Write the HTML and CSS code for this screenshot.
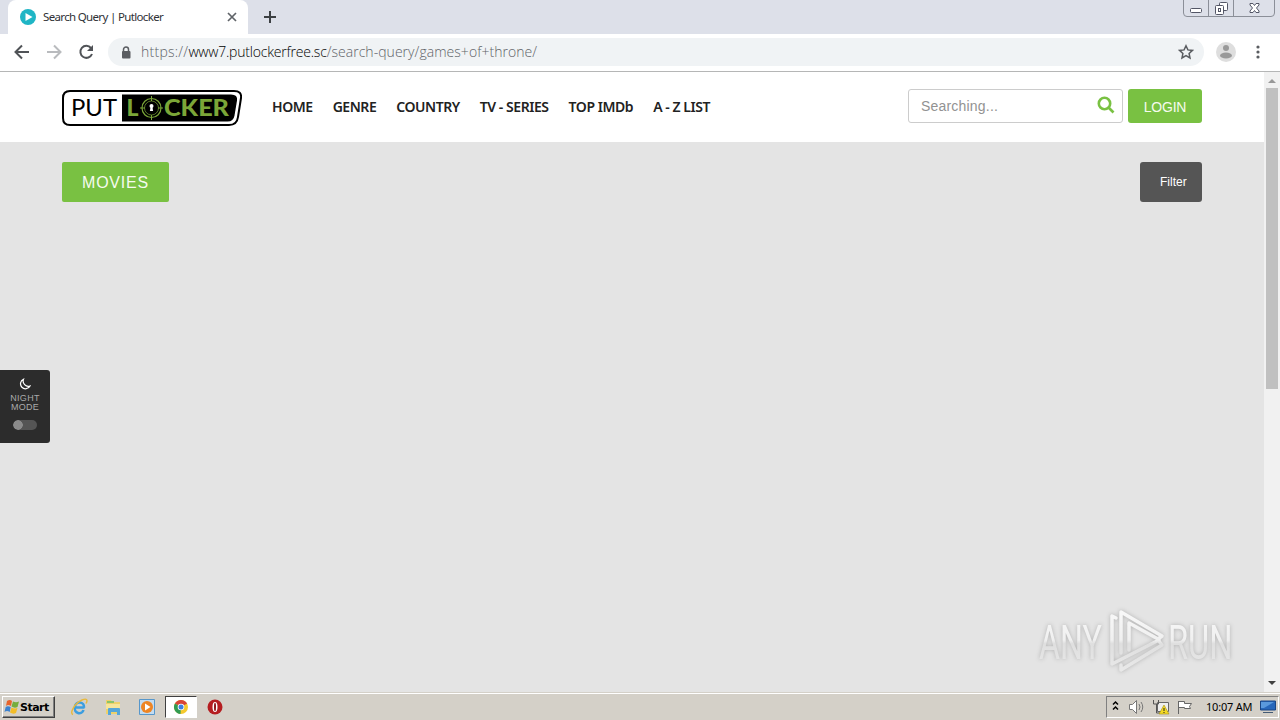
FILE: index.html
```
<!DOCTYPE html>
<html lang="en">

<head>
	<meta charset="UTF-8">
	<meta name="viewport" content="width=device-width, initial-scale=1.0">
	<title>Search Query | Putlocker</title>
	<link rel="stylesheet" href="styles.css">
</head>

<body>
	<div class="tabs">
		<div class="tab">
			<svg class="favicon" viewBox="0 0 16 16"><circle cx="8" cy="8" r="8" fill="#1fb5c5"/><path d="M5.5 4v8l7-4z" fill="#fff"/></svg>
			<span class="tab-title">Search Query | Putlocker</span>
			<svg class="tab-close" viewBox="0 0 10 10"><path d="M1 1l8 8M9 1l-8 8" stroke="#5f6368" stroke-width="1.7"/></svg>
		</div>
		<svg class="new-tab" viewBox="0 0 12 12"><path d="M6 0v12M0 6h12" stroke="#3c4043" stroke-width="2"/></svg>
		<svg class="window-buttons" viewBox="0 0 94 18">
			<path d="M1.500 0v13q0 3.500 3.500 3.500h84q3.500 0 3.500-3.500V0M26.500 0v16M51.500 0v16" fill="none" stroke="#8b8f98"/>
			<rect x="8.500" y="8.500" width="11" height="4" rx="1" fill="#fff" stroke="#535666"/>
			<rect x="37.500" y="2.500" width="8" height="8" rx="1" fill="#fff" stroke="#535666"/>
			<rect x="33.500" y="5.500" width="8" height="9" rx="1" fill="#fff" stroke="#535666"/>
			<rect x="36.500" y="8.500" width="2" height="3" fill="#fff" stroke="#535666"/>
			<path d="M68 3.500h3l1.500 2 1.500-2h3v1.500l-2.500 3 2.500 3v1.500h-3l-1.500-2-1.500 2h-3V11l2.500-3L68 5z" fill="#fff" stroke="#535666"/>
		</svg>
	</div>

	<div class="toolbar">
		<svg class="nav-icons" viewBox="0 0 108 36">
			<path d="M29 18H16M22 11.500L15.500 18l6.500 6.500" fill="none" stroke="#505357" stroke-width="2"/>
			<path d="M47 18h13M54 11.500l6.500 6.500-6.500 6.500" fill="none" stroke="#b9bbbe" stroke-width="2"/>
			<path d="M91 14a6 6 0 1 0 1 6" fill="none" stroke="#505357" stroke-width="2"/>
			<path d="M93 11v6h-6z" fill="#505357"/>
		</svg>
		<div class="omnibox">
			<svg class="lock" viewBox="0 0 10 13"><path d="M2.500 6V3.500a2.500 2.500 0 0 1 5 0V6" fill="none" stroke="#5a5d61" stroke-width="1.500"/><rect x="1" y="5" width="8.500" height="7.500" rx="1" fill="#5a5d61"/></svg>
			<span class="url"><span class="scheme">https://</span><b>www7.putlockerfree.sc</b>/search-query/games+of+throne/</span>
			<svg class="star" viewBox="0 0 16 16"><path d="M8 1.800l1.900 4.100 4.500.5-3.300 3.100.9 4.500L8 11.700 4 14l.9-4.500-3.300-3.100 4.500-.5z" fill="none" stroke="#5a5d61" stroke-width="1.500"/></svg>
		</div>
		<svg class="avatar" viewBox="0 0 20 20"><circle cx="10" cy="10" r="10" fill="#dedede"/><circle cx="10" cy="6" r="3" fill="#999"/><ellipse cx="10" cy="13.500" rx="6" ry="3" fill="#999"/></svg>
		<svg class="dots" viewBox="0 0 4 14"><g fill="#5a5d61"><circle cx="2" cy="2" r="1.600"/><circle cx="2" cy="7" r="1.600"/><circle cx="2" cy="12" r="1.600"/></g></svg>
	</div>

	<div class="viewport">
		<div class="page">
			<header class="header">
				<svg class="logo" viewBox="0 0 180 36">
					<path d="M8 1h164q8 0 7 7l-3 19q-1 8-9 8H8q-7 0-7-7V8q0-7 7-7z" fill="#fff" stroke="#000" stroke-width="2"/>
					<path d="M60 4.500h109q7 0 6 6l-2.500 15q-1 6-7 6H60z" fill="#000"/>
					<text class="logo-put" x="9" y="26" textLength="46" lengthAdjust="spacingAndGlyphs">PUT</text>
					<g class="logo-locker">
						<text x="64.500" y="26" textLength="12" lengthAdjust="spacingAndGlyphs">L</text>
						<text x="102" y="26" textLength="65" lengthAdjust="spacingAndGlyphs">CKER</text>
					</g>
					<g fill="none" stroke="#7ba638">
						<circle cx="89.500" cy="18" r="9.500" stroke-width="1.200"/>
						<circle cx="89.500" cy="18" r="7" stroke-width=".7"/>
						<path d="M89.500 6v5M89.500 25v5M78 18h5M96 18h5"/>
					</g>
					<circle cx="89.500" cy="16" r="2" fill="#fff"/>
					<path d="M88.700 16h1.600l.8 5h-3.200z" fill="#fff"/>
				</svg>
				<nav class="menu">
					<a>HOME</a>
					<a>GENRE</a>
					<a>COUNTRY</a>
					<a>TV - SERIES</a>
					<a>TOP IMDb</a>
					<a>A - Z LIST</a>
				</nav>
				<div class="search">
					<span>Searching...</span>
					<svg viewBox="0 0 18 18"><circle cx="7.500" cy="7.500" r="5.700" fill="none" stroke="#79c142" stroke-width="2.600"/><path d="M11.500 11.500l5 5" stroke="#79c142" stroke-width="2.600"/></svg>
				</div>
				<a class="login">LOGIN</a>
			</header>

			<main class="content">
				<h1 class="heading">MOVIES</h1>
				<a class="filter">Filter</a>
			</main>

			<div class="night">
				<svg class="moon" viewBox="0 0 12 12"><path d="M4.500 1.200A5 5 0 1 0 11 8 5.200 5.200 0 0 1 4.500 1.200z" fill="none" stroke="#fff" stroke-width="1.200"/></svg>
				<span>NIGHT<br>MODE</span>
				<i class="switch"></i>
			</div>

			<svg class="watermark" viewBox="0 0 210 72">
				<defs>
					<linearGradient id="shine" x1="0" y1="0" x2="0" y2="72" gradientUnits="userSpaceOnUse">
						<stop offset=".1" stop-color="#f8f8f8"/>
						<stop offset=".5" stop-color="#f0f0f0"/>
						<stop offset=".55" stop-color="#dfdfdf"/>
						<stop offset=".9" stop-color="#e8e8e8"/>
					</linearGradient>
					<!-- the letters sit on a baseline at 55, so their gradient starts above it -->
					<linearGradient id="shine-text" href="#shine" y1="-55" y2="17"/>
				</defs>
				<g class="watermark-text" fill="url(#shine-text)">
					<text transform="translate(9 55) scale(.67 1)">ANY</text>
					<text transform="translate(138 55) scale(.68 1)">RUN</text>
				</g>
				<g fill="none" stroke="url(#shine)" stroke-width="3.500" stroke-linejoin="round" stroke-linecap="round">
					<path d="M91 49V8l41 24-4 3-29-16v27"/>
					<path d="M86 14l-4-2v48l47-24"/>
					<path d="M91 61v5l41-25-4-5"/>
				</g>
			</svg>
		</div>
		<svg class="scrollbar" viewBox="0 0 16 620">
			<rect width="16" height="620" fill="#f1f1f1"/>
			<path d="M4 11l4-4 4 4z" fill="#989898"/>
			<rect x="2" y="16" width="12" height="301" fill="#c0c0c0"/>
			<path d="M4 609l4 4 4-4z" fill="#404040"/>
		</svg>
	</div>

	<footer class="taskbar">
		<div class="start">
			<svg viewBox="0 0 16 16">
				<path d="M3 2q3-2 5 0L7 7Q4 5 2 7z" fill="#e8642b"/>
				<path d="M9 2.500q3 1.500 6 0L13.500 8q-3 1.500-6-.5z" fill="#76ad3c"/>
				<path d="M1.700 8q2-1.500 5 0l-1 5Q3 11 .5 13z" fill="#3c82cf"/>
				<path d="M7.500 8.500q3 1.500 6 .5l-1.500 5q-3 1.500-6-.5z" fill="#f3bd28"/>
			</svg>
			<b>Start</b>
		</div>
		<div class="tasks">
			<div class="task">
				<svg viewBox="0 0 18 18"><path d="M14.500 9.500H5a4.300 4.300 0 0 0 8.500 2.500M5 8.500a4.500 4.500 0 0 1 9 1" fill="none" stroke="#3c9ee0" stroke-width="2.600"/><path d="M3 16.500C-1 15 5 5 12 2c5-2 6 0 4 3.500" fill="none" stroke="#e9b93a" stroke-width="1.400"/></svg>
			</div>
			<div class="task">
				<svg viewBox="0 0 18 18"><path d="M2 2h5l1 2h8v12H2z" fill="#eed16a"/><path d="M3 3h7v2H3z" fill="#8ac36b"/><path d="M2 6h14v5H2z" fill="#f6e59b"/><path d="M4 17v-6q0-1 1-1h10q1 0 1 1v6h-3v-3H7v3z" fill="#55a6d9"/></svg>
			</div>
			<div class="task">
				<svg viewBox="0 0 18 18"><path d="M1.500 1.500h15v15h-15z" fill="#c3dcf1" stroke="#5797cb"/><circle cx="9" cy="9" r="6" fill="#ee8524"/><path d="M7 5.500v7L12.500 9z" fill="#fff"/></svg>
			</div>
			<div class="task active">
				<svg viewBox="0 0 18 18"><circle cx="9" cy="9" r="7" fill="#f5c92e"/><path d="M9 9L2.900 5.500A7 7 0 0 1 15.100 5.500z" fill="#d94437"/><path d="M9 9L2.900 5.500A7 7 0 0 0 8.500 16z" fill="#329b52"/><circle cx="9" cy="9" r="3.300" fill="#fff"/><circle cx="9" cy="9" r="2.500" fill="#3e7fe0"/></svg>
			</div>
			<div class="task">
				<svg viewBox="0 0 18 18"><circle cx="9" cy="9" r="7.500" fill="#b51d20"/><ellipse cx="9" cy="9" rx="2.500" ry="5" fill="#fff"/><ellipse cx="9" cy="9" rx="1" ry="4.200" fill="#8d1518"/></svg>
			</div>
		</div>
		<div class="tray">
			<svg class="tray-icons" viewBox="0 0 94 20">
				<path d="M6 7.500L8.500 5 11 7.500M6 12.500L8.500 10l2.500 2.500" fill="none" stroke="#000" stroke-width="1.500"/>
				<path d="M22.500 7.500h3l4-4v13l-4-4h-3z" fill="#fff" stroke="#777"/>
				<path d="M32 7q2 3 0 6M34 5q3.500 5 0 10" fill="none" stroke="#777"/>
				<path d="M50.500 5.500h11v9h-11z" fill="#eee" stroke="#666"/>
				<path d="M46.500 3v4h5V3M49.500 7v9h6" fill="none" stroke="#555"/>
				<path d="M57 8l5 9H52z" fill="#f4da25" stroke="#a58e12" stroke-width=".6"/>
				<path d="M57 11v3M57 15v1" stroke="#222"/>
				<path d="M71.500 17V4M71.500 4.500h6v2h7l-2 3 1 2h-6v-1h-6" fill="#fff" stroke="#666"/>
			</svg>
			<span class="clock">10:07 AM</span>
			<svg class="desktop" viewBox="0 0 16 14"><path d="M.5 1h15v9H.500z" fill="#2767ba" stroke="#1b4684"/><path d="M1 2h13L4 8H1z" fill="#5a99dc"/><path d="M3 12.500h10" stroke="#445b75"/></svg>
		</div>
	</footer>
</body>

</html>
```
FILE: styles.css
```
* {
	margin: 0;
	padding: 0;
	box-sizing: border-box;
}

svg {
	display: block;
	flex: none;
}

body {
	display: grid;
	grid-template-rows: 34px 38px 620px 28px;
	width: 1280px;
	height: 720px;
	overflow: hidden;
	font-family: "Liberation Sans", Arial, sans-serif;
}

/* browser */
.tabs {
	display: flex;
	background: #dde0e9;
}

.tab {
	display: flex;
	align-items: center;
	width: 240px;
	margin-left: 8px;
	padding: 0 11px 0 12px;
	border-radius: 8px 8px 0 0;
	background: #fff;
}

.favicon {
	width: 16px;
	height: 16px;
}

.tab-title {
	flex: 1;
	margin-left: 7px;
	padding-bottom: 2px;
	font: 11.5px "Noto Sans", sans-serif;
	letter-spacing: -.66px;
	color: #303236;
	white-space: nowrap;
}

.tab-close {
	width: 10px;
	height: 10px;
}

.new-tab {
	width: 12px;
	height: 12px;
	margin: 11px 0 0 16px;
}

.window-buttons {
	width: 94px;
	height: 18px;
	margin-left: auto;
	margin-right: 4px;
}

.toolbar {
	display: flex;
	align-items: center;
	padding-bottom: 1px;
	background: #fff;
	border-bottom: 1px solid #b5b6b6;
}

.nav-icons {
	width: 108px;
	height: 36px;
}

.omnibox {
	display: flex;
	align-items: center;
	width: 1096px;
	height: 28px;
	padding: 0 10px 0 13px;
	border-radius: 14px;
	background: #f0f3f5;
}

.lock {
	width: 10px;
	height: 13px;
}

.url {
	flex: 1;
	margin-left: 10px;
	padding-bottom: 1px;
	font: 300 14px "Open Sans", sans-serif;
	letter-spacing: .04px;
	color: #5f6368;
}

.scheme {
	letter-spacing: .25px;
}

.url b {
	font-weight: 300;
	letter-spacing: -.2px;
	color: #000;
}

.star {
	width: 16px;
	height: 16px;
}

.avatar {
	width: 20px;
	height: 20px;
	margin-left: 12px;
}

.dots {
	width: 4px;
	height: 14px;
	margin-left: 20px;
}

/* page */
.viewport {
	display: flex;
}

.page {
	position: relative;
	width: 1264px;
	background: #e4e4e4;
}

.scrollbar {
	width: 16px;
	height: 620px;
}

.header {
	display: flex;
	height: 70px;
	padding: 17px 62px 0;
	background: #fff;
}

.logo {
	width: 180px;
	height: 36px;
	margin-top: 1px;
}

.logo-put {
	font: 23px Lato, sans-serif;
}

.logo-locker {
	font: 900 23px Lato, sans-serif;
	fill: #7ba638;
}

.menu {
	display: flex;
	gap: 20px;
	margin-left: 30px;
	font: 600 14px/35px "Noto Sans", sans-serif;
	letter-spacing: -.45px;
	color: #222;
	white-space: nowrap;
}

.search {
	display: flex;
	justify-content: space-between;
	width: 215px;
	height: 34px;
	margin-left: auto;
	padding: 0 7px 0 12px;
	border: 1px solid #ccc;
	border-radius: 3px;
	font-size: 14px;
	line-height: 33px;
	letter-spacing: .2px;
	color: #929292;
}

.search svg {
	width: 18px;
	height: 18px;
	margin-top: 6px;
}

.login {
	width: 74px;
	height: 34px;
	margin-left: 5px;
	border-radius: 3px;
	background: #79c142;
	font-size: 14px;
	line-height: 36px;
	letter-spacing: -.2px;
	text-align: center;
	color: #f5fbef;
}

.content {
	display: flex;
	justify-content: space-between;
	padding: 20px 62px;
}

.heading {
	width: 107px;
	height: 40px;
	padding-left: 20px;
	border-radius: 2px;
	background: #79c142;
	font-size: 16px;
	font-weight: 400;
	line-height: 41px;
	letter-spacing: .8px;
	color: #f5fbef;
}

.filter {
	width: 62px;
	height: 40px;
	padding-left: 20px;
	border-radius: 3px;
	background: #555;
	font-size: 12px;
	line-height: 40px;
	color: #fff;
}

.night {
	position: absolute;
	top: 298px;
	left: 0;
	display: flex;
	flex-direction: column;
	align-items: center;
	width: 50px;
	height: 73px;
	padding-top: 8px;
	border-radius: 0 3px 3px 0;
	background: #2c2c2c;
	font-size: 9px;
	line-height: 9px;
	letter-spacing: .3px;
	text-align: center;
	color: #aaa;
}

.moon {
	width: 12px;
	height: 12px;
	margin-bottom: 4px;
}

.switch {
	width: 24px;
	height: 10px;
	margin-top: 8px;
	border-radius: 5px;
	background: radial-gradient(circle at 5px 5px, #8b8b8b 4.500px, #555 5px);
}

.watermark {
	position: absolute;
	left: 1030px;
	top: 532px;
	width: 210px;
	height: 72px;
	filter: drop-shadow(0 0 2px #b0b0b0);
}

.watermark-text {
	font: 48px Roboto, sans-serif;
}

/* taskbar */
.taskbar {
	display: flex;
	padding: 3px 0 1px 1px;
	background: #d4d0c8;
	border-top: 1px solid #d4d0c8;
	box-shadow: inset 0 1px #fff;
}

.start {
	display: flex;
	align-items: center;
	width: 53px;
	height: 22px;
	margin-left: 1px;
	padding-left: 1px;
	border: 1px solid;
	border-color: #fff #404040 #404040 #fff;
	box-shadow: inset -1px -1px #808080;
	font: 11px "DejaVu Sans", sans-serif;
	letter-spacing: -.5px;
}

.start svg {
	width: 16px;
	height: 16px;
}

.tasks {
	display: flex;
	gap: 2px;
	margin-left: 8px;
}

.task {
	display: grid;
	place-items: center;
	width: 32px;
	height: 22px;
}

.task svg {
	width: 18px;
	height: 18px;
}

.active {
	background: #fff;
	border: 1px solid;
	border-color: #404040 #fff #fff #404040;
}

.tray {
	display: flex;
	align-items: center;
	width: 173px;
	height: 22px;
	margin-left: auto;
	margin-right: 1px;
	border: 1px solid;
	border-color: #808080 #fff #fff #808080;
}

.tray-icons {
	width: 94px;
	height: 20px;
}

.clock {
	width: 54px;
	margin-left: 5px;
	padding-bottom: 1px;
	font: 11px "Noto Sans", sans-serif;
	letter-spacing: -.2px;
	white-space: nowrap;
}

.desktop {
	width: 16px;
	height: 14px;
}
```
